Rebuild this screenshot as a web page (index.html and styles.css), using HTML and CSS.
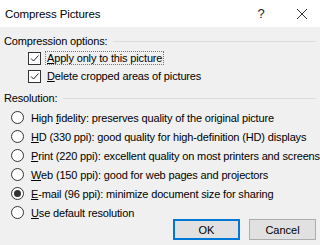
FILE: index.html
```html
<!DOCTYPE html>
<html lang="en">
  <head>
    <meta charset="UTF-8" />
    <title>Compress Pictures</title>
    <link rel="stylesheet" href="styles.css">
  </head>
  <body>
    <div class="dialog">
      <!-- Заголовок окна -->
      <div class="titlebar">
        <span class="title">Compress Pictures</span>
        <span class="title-btn help">?</span>
        <span class="title-btn close">
          <svg width="12" height="12" viewBox="0 0 12 12">
            <path d="M1 1 L11 11 M11 1 L1 11" stroke="#333" stroke-width="1" fill="none" />
          </svg>
        </span>
      </div>

      <div class="content">
        <!-- Параметры сжатия -->
        <div class="group-head">Compression options:</div>
        <label class="row check-row">
          <span class="box checked">
            <svg width="11" height="11" viewBox="0 0 11 11">
              <path d="M2 5.5 L4.5 8 L9.5 2.5" stroke="#222" stroke-width="1" fill="none" />
            </svg>
          </span>
          <span class="text focus"><u>A</u>pply only to this picture</span>
        </label>
        <label class="row check-row">
          <span class="box checked">
            <svg width="11" height="11" viewBox="0 0 11 11">
              <path d="M2 5.5 L4.5 8 L9.5 2.5" stroke="#222" stroke-width="1" fill="none" />
            </svg>
          </span>
          <span class="text"><u>D</u>elete cropped areas of pictures</span>
        </label>

        <!-- Разрешение -->
        <div class="group-head res-head">Resolution:</div>
        <label class="row radio-row">
          <span class="radio"></span>
          <span class="text">High <u>f</u>idelity: preserves quality of the original picture</span>
        </label>
        <label class="row radio-row">
          <span class="radio"></span>
          <span class="text"><u>H</u>D (330 ppi): good quality for high-definition (HD) displays</span>
        </label>
        <label class="row radio-row">
          <span class="radio"></span>
          <span class="text"><u>P</u>rint (220 ppi): excellent quality on most printers and screens</span>
        </label>
        <label class="row radio-row">
          <span class="radio"></span>
          <span class="text"><u>W</u>eb (150 ppi): good for web pages and projectors</span>
        </label>
        <label class="row radio-row">
          <span class="radio selected"></span>
          <span class="text"><u>E</u>-mail (96 ppi): minimize document size for sharing</span>
        </label>
        <label class="row radio-row">
          <span class="radio"></span>
          <span class="text"><u>U</u>se default resolution</span>
        </label>

        <!-- Кнопки -->
        <div class="buttons">
          <button class="btn default">OK</button>
          <button class="btn">Cancel</button>
        </div>
      </div>
    </div>
  </body>
</html>
```

FILE: styles.css
```css
/* ======= Переменные ======= */
:root {
  --font-family: "Liberation Sans", Arial, sans-serif;
  --color-bg: #f0f0f0;
  --color-text: #000;
  --color-line: #dcdcdc;
  --color-control: #333;
  --color-btn: #e1e1e1;
  --color-btn-border: #adadad;
  --color-accent: #0078d7;
}

* {
  box-sizing: border-box;
  margin: 0;
  padding: 0;
}

body {
  font-family: var(--font-family);
  font-size: 11px;
  letter-spacing: -0.15px;
  color: var(--color-text);
  background-color: var(--color-bg);
  width: 320px;
  height: 245px;
  overflow: hidden;
}

/* ======= Заголовок ======= */
.titlebar {
  height: 27px;
  background-color: #fff;
  display: flex;
  align-items: center;
  padding-left: 5px;
}

.title {
  font-size: 11.5px;
  letter-spacing: -0.1px;
  flex: 1;
}

.title-btn {
  width: 40px;
  height: 27px;
  display: flex;
  align-items: center;
  justify-content: center;
  font-size: 13px;
  color: #222;
}

.help {
  margin-right: 3px;
}

.close {
  width: 36px;
}

/* ======= Содержимое ======= */
.content {
  padding: 6px 4px 0 4px;
}

.group-head {
  height: 16px;
  display: flex;
  align-items: center;
  gap: 6px;
}

.group-head::after {
  content: "";
  flex: 1;
  height: 1px;
  background-color: var(--color-line);
}

.res-head {
  margin-top: 5px;
  margin-bottom: 2px;
}

.row {
  display: flex;
  align-items: center;
}

.check-row {
  height: 18px;
  padding-left: 24px;
}

.radio-row {
  height: 19px;
  padding-left: 7px;
}

.text {
  padding: 0 1px;
  white-space: nowrap;
}

.focus {
  outline: 1px dotted #777;
  outline-offset: 0;
}

.box {
  flex-shrink: 0;
  width: 13px;
  height: 13px;
  border: 1px solid var(--color-control);
  background-color: #fff;
  display: flex;
  align-items: center;
  justify-content: center;
  margin-right: 5px;
}

.radio {
  flex-shrink: 0;
  width: 13px;
  height: 13px;
  border: 1px solid var(--color-control);
  border-radius: 50%;
  background-color: #fff;
  display: flex;
  align-items: center;
  justify-content: center;
  margin-right: 6px;
}

.radio.selected::after {
  content: "";
  width: 7px;
  height: 7px;
  border-radius: 50%;
  background-color: var(--color-control);
}

/* ======= Кнопки ======= */
.buttons {
  display: flex;
  justify-content: flex-end;
  gap: 9px;
  margin-top: -3px;
}

.btn {
  width: 67px;
  height: 21px;
  font-family: var(--font-family);
  font-size: 11px;
  background-color: var(--color-btn);
  border: 1px solid var(--color-btn-border);
  color: var(--color-text);
}

.btn.default {
  border: 2px solid var(--color-accent);
}
```
